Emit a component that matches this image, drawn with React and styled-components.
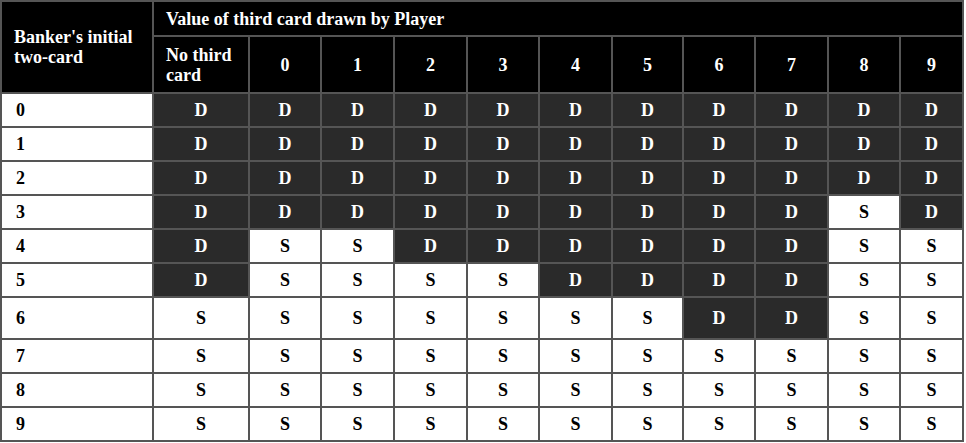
import styled, { createGlobalStyle } from "styled-components";

const GlobalStyle = createGlobalStyle`
  body {
    margin: 0;
    background: #fff;
    font-family: "Liberation Serif", "Times New Roman", serif;
  }
`;

const StyledTable = styled.table`
  border-collapse: collapse;
  table-layout: fixed;
  width: 962px;
  font-family: "Liberation Serif", "Times New Roman", serif;
  font-size: 18px;
  font-weight: bold;
  line-height: 20px;

  td,
  th {
    border: 2px solid #555;
  }
`;

const StyledHead = styled.th`
  background: #000;
  color: #fff;
  font-weight: bold;
  text-align: ${(props) => (props.$center ? "center" : "left")};
  padding: ${(props) => (props.$center ? "0" : "0 12px")};
  height: ${(props) => props.$height || 33}px;
  vertical-align: middle;
`;

const StyledLabel = styled.td`
  background: #fff;
  color: #000;
  text-align: left;
  padding: 0 14px;
  height: ${(props) => (props.$tall ? 40 : 32)}px;
`;

const StyledCell = styled.td`
  background: ${(props) => (props.$draw ? "#2a2a2a" : "#fff")};
  color: ${(props) => (props.$draw ? "#fff" : "#000")};
  text-align: center;
  padding: 0;
`;

const widths = [152, 96, 72, 73, 73, 72, 73, 71, 72, 73, 72, 63];
const digits = ["0", "1", "2", "3", "4", "5", "6", "7", "8", "9"];

// columns: no third card, then 0..9
const rows = [
  "DDDDDDDDDDD",
  "DDDDDDDDDDD",
  "DDDDDDDDDDD",
  "DDDDDDDDDSD",
  "DSSDDDDDDSS",
  "DSSSSDDDDSS",
  "SSSSSSSDDSS",
  "SSSSSSSSSSS",
  "SSSSSSSSSSS",
  "SSSSSSSSSSS",
];

export default function App() {
  return (
    <>
      <GlobalStyle />
      <StyledTable>
        <colgroup>
          {widths.map((w, i) => (
            <col key={i} style={{ width: w }} />
          ))}
        </colgroup>
        <thead>
          <tr>
            <StyledHead rowSpan={2}>Banker's initial two-card</StyledHead>
            <StyledHead colSpan={11}>Value of third card drawn by Player</StyledHead>
          </tr>
          <tr>
            <StyledHead $height={55}>No third card</StyledHead>
            {digits.map((d) => (
              <StyledHead key={d} $center $height={55}>
                {d}
              </StyledHead>
            ))}
          </tr>
        </thead>
        <tbody>
          {rows.map((row, r) => (
            <tr key={r}>
              <StyledLabel $tall={r === 6}>{r}</StyledLabel>
              {row.split("").map((v, c) => (
                <StyledCell key={c} $draw={v === "D"}>
                  {v}
                </StyledCell>
              ))}
            </tr>
          ))}
        </tbody>
      </StyledTable>
    </>
  );
}
